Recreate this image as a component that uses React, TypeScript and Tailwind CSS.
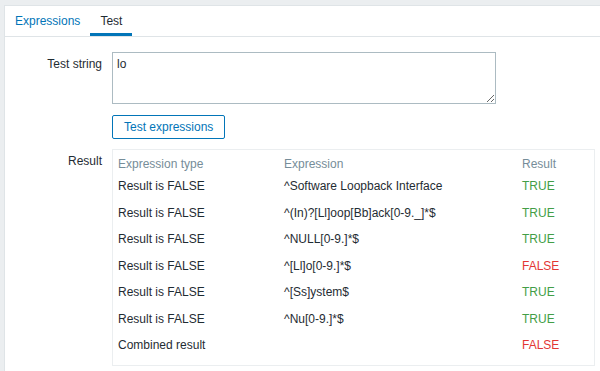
import React from "react";

const rows: { type: string; expr: string; result: "TRUE" | "FALSE" }[] = [
  { type: "Result is FALSE", expr: "^Software Loopback Interface", result: "TRUE" },
  { type: "Result is FALSE", expr: "^(In)?[Ll]oop[Bb]ack[0-9._]*$", result: "TRUE" },
  { type: "Result is FALSE", expr: "^NULL[0-9.]*$", result: "TRUE" },
  { type: "Result is FALSE", expr: "^[Ll]o[0-9.]*$", result: "FALSE" },
  { type: "Result is FALSE", expr: "^[Ss]ystem$", result: "TRUE" },
  { type: "Result is FALSE", expr: "^Nu[0-9.]*$", result: "TRUE" },
  { type: "Combined result", expr: "", result: "FALSE" },
];

export default function App() {
  return (
    <div
      className="h-[371px] w-[600px] overflow-hidden bg-[#ebeef0] pl-[4px] pt-[5px] text-[12px] leading-[14px] text-[#1f2c33]"
      style={{ fontFamily: '"Liberation Sans", Arial, sans-serif' }}
    >
      <div className="h-[400px] w-[620px] border-l border-t border-[#dfe4e7] bg-white">
        {/* tabs */}
        <div className="flex h-[31px] border-b border-[#dfe4e7]">
          <div className="flex h-[30px] items-center px-[10px] text-[#0275b8]">Expressions</div>
          <div className="flex h-[30px] items-center px-[10px] text-[#1f2c33] shadow-[inset_0_-3px_0_#0275b8]">
            Test
          </div>
        </div>

        {/* form */}
        <div className="flex flex-col pt-[15px]">
          <div className="flex">
            <div className="w-[97px] shrink-0 pt-[5px] text-right">Test string</div>
            <div className="ml-[10px]">
              <textarea
                readOnly
                value="lo"
                className="block h-[52px] w-[384px] border border-[#acbbc2] bg-white px-[4px] pt-[4px] text-[12px] leading-[14px] text-[#1f2c33] outline-none"
                style={{ fontFamily: '"Liberation Sans", Arial, sans-serif', resize: "both" }}
              />
            </div>
          </div>

          <div className="mt-[11px] flex">
            <div className="w-[97px] shrink-0" />
            <div className="ml-[10px]">
              <button className="flex h-[24px] items-center rounded-[2px] border border-[#0275b8] bg-white px-[11px] text-[12px] text-[#0275b8]">
                Test expressions
              </button>
            </div>
          </div>

          <div className="mt-[10px] flex">
            <div className="w-[97px] shrink-0 pt-[5px] text-right">Result</div>
            <div className="ml-[10px] w-[483px] border border-[#ebeef0] pb-[6px]">
              <div className="flex h-[23px] pt-[7px] text-[#768d99]">
                <div className="w-[166px] px-[5px]">Expression type</div>
                <div className="w-[238px] px-[5px]">Expression</div>
                <div className="flex-1 px-[5px]">Result</div>
              </div>
              {rows.map((r, i) => (
                <div key={i} className="flex h-[26.5px] items-center">
                  <div className="w-[166px] px-[5px]">{r.type}</div>
                  <div className="w-[238px] px-[5px]">{r.expr}</div>
                  <div
                    className={
                      "flex-1 px-[5px] " +
                      (r.result === "TRUE" ? "text-[#429e47]" : "text-[#e33734]")
                    }
                  >
                    {r.result}
                  </div>
                </div>
              ))}
            </div>
          </div>
        </div>
      </div>
    </div>
  );
}
